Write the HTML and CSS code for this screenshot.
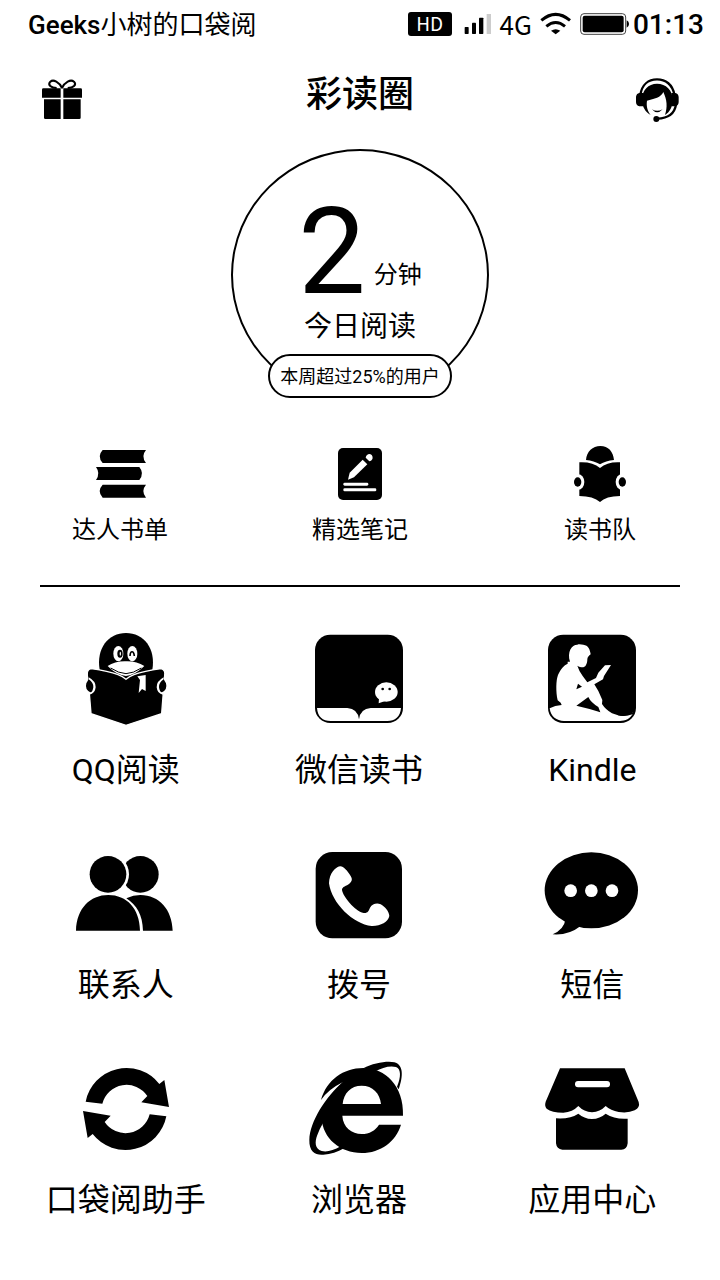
FILE: index.html
```html
<!DOCTYPE html>
<html lang="zh-CN">
<head>
  <meta charset="UTF-8" />
  <meta name="viewport" content="width=device-width, initial-scale=1.0"/>
  <title>彩读圈</title>
  <link rel="stylesheet" href="styles.css">
</head>
<body>

  <div class="status-bar">
    <span class="carrier">Geeks<span class="carrier-name">小树的口袋阅</span></span>
    <div class="status-icons">
      <span class="hd">HD</span>
      <svg class="signal" viewBox="189 39 84 66" aria-hidden="true">
        <rect x="191" y="81" width="12" height="21" rx="2"/>
        <rect x="213" y="68" width="12" height="34" rx="2"/>
        <rect x="234" y="53" width="13" height="49" rx="2"/>
        <rect x="257" y="42" width="13" height="60" fill="#ccc"/>
      </svg>
      <span class="network">4G</span>
      <svg class="wifi" viewBox="424 39 96 66" aria-hidden="true">
        <path d="M428 61Q471 25 514 61M443 79Q471 56 499 79" fill="none" stroke="#000" stroke-width="9"/>
        <path d="M457 92Q471 83 485 92L471 103Z"/>
      </svg>
      <div class="power">
        <svg class="battery" viewBox="540 39 147 66" aria-hidden="true">
          <rect x="542" y="41" width="135" height="62" rx="10" fill="none" stroke="#444" stroke-width="3"/>
          <rect x="548" y="47" width="123" height="50" rx="6"/>
          <path d="M680 61Q687 64 687 72Q687 80 680 83Z"/>
        </svg>
        <span class="time">01:13</span>
      </div>
    </div>
  </div>

  <header class="header">
    <button class="icon-btn" aria-label="礼物">
      <svg viewBox="120 234 132 132">
        <path d="M130 265H182V293H126V269Q126 265 130 265ZM190 265H242Q246 265 246 269V293H190ZM132 298H182V357H136Q132 357 132 353ZM190 298H242V353Q242 357 238 357H190Z"/>
        <path d="M186 264C178 246 160 237 151 245C142 255 153 264 170 264M186 264C194 246 212 237 222 245C231 255 220 264 203 264" fill="none" stroke="#000" stroke-width="6"/>
      </svg>
    </button>
    <h1 class="logo">彩读圈</h1>
    <button class="icon-btn" aria-label="客服">
      <svg viewBox="708 234 132 132">
        <path d="M721 284C726 254 745 238 771 238C797 238 818 254 823 284M828 314C824 340 804 355 772 356" fill="none" stroke="#000" stroke-width="7"/>
        <path d="M718 279H730V319H718Q708 316 708 306V291Q709 281 718 279ZM826 279H814V319H826Q836 316 836 306V291Q835 281 826 279Z"/>
        <path d="M726 300C726 270 745 251 771 251C798 251 818 270 818 300C818 320 809 337 795 345C803 320 801 300 790 276C784 292 762 297 741 302C738 320 744 335 752 345C735 336 727 320 726 300Z"/>
        <path d="M756 328Q771 337 788 328Q771 346 756 328Z"/>
        <circle cx="769" cy="357" r="9"/>
      </svg>
    </button>
  </header>

  <section class="today">
    <div class="dial">
      <div class="minutes">
        <span class="count">2</span>
        <span class="unit">分钟</span>
      </div>
      <div class="caption">今日阅读</div>
    </div>
    <div class="rank">本周超过25%的用户</div>
  </section>

  <nav class="shortcuts">
    <a class="shortcut" href="#">
      <svg viewBox="96 33 168 168">
        <path d="M128 45H258Q242 64 258 84H128Q110 64 128 45ZM108 96H238Q254 115 238 135H108Q122 115 108 96ZM128 149H258Q242 168 258 188H128Q110 168 128 149Z"/>
      </svg>
      <span>达人书单</span>
    </a>
    <a class="shortcut" href="#">
      <svg viewBox="816 33 168 168">
        <rect x="834" y="39" width="132" height="156" rx="15"/>
        <g fill="#fff">
          <path d="M908 74L922 88L882 127L864 134L869 113Z"/>
          <path d="M917 68C919 57 929 54 935 60C941 68 937 77 928 79Z"/>
          <rect x="850" y="143" width="75" height="9" rx="4"/>
          <rect x="850" y="160" width="99" height="9" rx="4"/>
        </g>
      </svg>
      <span>精选笔记</span>
    </a>
    <a class="shortcut" href="#">
      <svg viewBox="96 33 168 168">
        <path d="M138 75C140 49 158 33 181 33C205 33 220 50 222 75Q197 77 180 88Q162 77 138 75Z"/>
        <path d="M118 82Q158 80 180 99Q202 80 240 82V183Q198 183 180 201Q160 183 118 183Z"/>
        <ellipse cx="115" cy="141" rx="18" ry="23" fill="#fff"/>
        <ellipse cx="245" cy="141" rx="18" ry="23" fill="#fff"/>
        <ellipse cx="113" cy="141" rx="11" ry="14"/>
        <ellipse cx="247" cy="141" rx="11" ry="14"/>
      </svg>
      <span>读书队</span>
    </a>
  </nav>

  <main class="apps">
    <a class="app" href="#">
      <svg viewBox="54 30 288 288">
        <path d="M119 150C108 85 145 39 198 39C251 39 288 85 277 150L198 185Z"/>
        <g fill="#fff">
          <ellipse cx="175" cy="101" rx="15" ry="23"/>
          <ellipse cx="217" cy="101" rx="15" ry="23"/>
          <path d="M143 138Q165 123 198 124Q230 123 253 138Q225 166 198 168Q170 166 143 138Z"/>
        </g>
        <ellipse cx="180" cy="101" rx="8" ry="12"/>
        <ellipse cx="181" cy="101" rx="2" ry="6" fill="#fff"/>
        <path d="M210 108C211 91 221 91 223 108" fill="none" stroke="#000" stroke-width="5"/>
        <path d="M152 144Q176 160 198 161Q220 160 244 144" fill="none" stroke="#000" stroke-width="3"/>
        <path d="M94 146Q145 153 174 164Q188 169 198 178Q208 169 222 164Q251 153 303 146Q317 149 314 166L305 281L198 316L93 281L88 220L82 166Q80 148 94 146Z" stroke="#fff" stroke-width="4"/>
        <path d="M232 169L257 165V213L246 207L236 219L240 180Z" fill="#fff"/>
        <path d="M86 172Q108 184 107 202Q105 222 88 224ZM311 172Q289 184 290 202Q292 222 309 224Z" fill="#fff"/>
        <path d="M86 178Q101 188 100 202Q98 217 91 217Q74 209 79 190ZM311 178Q296 188 297 202Q299 217 306 217Q323 209 318 190Z"/>
      </svg>
      <span>QQ阅读</span>
    </a>
    <a class="app" href="#">
      <svg viewBox="63 30 288 288">
        <rect x="75" y="44" width="264" height="265" rx="46"/>
        <g fill="#fff">
          <path d="M81 264H172Q203 266 207 298Q211 266 242 264H333C331 290 315 303 292 303H122C98 303 83 290 81 264Z"/>
          <ellipse cx="289" cy="216" rx="34" ry="29"/>
          <path d="M267 234L266 250L288 242Z"/>
        </g>
        <circle cx="278" cy="207" r="4"/>
        <circle cx="299" cy="207" r="4"/>
      </svg>
      <span>微信读书</span>
    </a>
    <a class="app" href="#">
      <svg viewBox="762 30 288 288">
        <rect x="774" y="44" width="264" height="265" rx="46"/>
        <path fill="#fff" d="M840 125C831 95 845 74 862 74C868 71 875 74 880 74C895 76 900 88 902 103C897 107 892 111 892 118C892 127 889 140 880 142C872 142 867 140 862 137Q867 153 878 168L892 187L918 174L925 158L945 136L963 135L942 168L939 178L913 193L925 213L937 240L936 252Q946 268 966 280L984 286Q1010 292 1030 277C1022 298 1005 303 990 303H822C800 303 782 290 779 265Q795 256 815 255L812 248L803 241C797 215 798 180 804 165C812 148 822 135 833 131V125Z"/>
        <path d="M859 257L895 231Q902 247 925 261L931 277Q900 266 859 257ZM864 191L876 200L859 208ZM984 279Q1008 286 1033 275L1028 283Q1005 291 984 286Z"/>
      </svg>
      <span>Kindle</span>
    </a>
    <a class="app" href="#">
      <svg viewBox="54 15 288 288">
        <circle cx="241" cy="103" r="55"/>
        <circle cx="144" cy="103" r="63" fill="#fff"/>
        <circle cx="144" cy="103" r="55"/>
        <path d="M48 272C50 205 90 165 145 165C200 165 239 205 240 272ZM199 175Q220 165 241 165C298 166 336 208 338 272H249C248 225 230 195 199 175Z"/>
      </svg>
      <span>联系人</span>
    </a>
    <a class="app" href="#">
      <svg viewBox="753 15 288 288">
        <rect x="767" y="36" width="259" height="259" rx="50"/>
        <path fill="#fff" d="M840 79C850 78 862 92 872 108C878 118 876 124 868 131C860 138 846 139 846 150C850 172 885 212 908 218C922 221 926 214 930 203C937 192 950 188 962 193C975 200 987 214 988 228C985 246 960 259 935 258C880 253 815 190 807 130C808 100 825 82 840 79Z"/>
      </svg>
      <span>拨号</span>
    </a>
    <a class="app" href="#">
      <svg viewBox="72 15 288 288">
        <ellipse cx="214" cy="151" rx="140" ry="114"/>
        <path d="M136 240Q132 268 98 283Q145 287 182 258Z"/>
        <g fill="#fff">
          <circle cx="152" cy="152" r="19"/>
          <circle cx="214" cy="152" r="19"/>
          <circle cx="276" cy="152" r="19"/>
        </g>
      </svg>
      <span>短信</span>
    </a>
    <a class="app" href="#">
      <svg viewBox="114 30 288 288">
        <path d="M137 155A125 125 0 0 1 358 102L373 90L387 171L304 157L322 138A75 75 0 0 0 187 161Z"/>
        <path d="M379 199A125 125 0 0 1 158 252L143 264L129 183L212 197L194 216A75 75 0 0 0 329 193Z"/>
      </svg>
      <span>口袋阅助手</span>
    </a>
    <a class="app" href="#">
      <svg viewBox="813 30 288 288">
        <path fill-rule="evenodd" d="M843 150C860 90 910 54 970 54C1036 54 1092 108 1089 197H907C909 232 935 252 965 252C988 252 1007 241 1017 224H1083C1068 274 1022 309 965 309C900 309 848 265 845 205L850 170Q875 130 908 97Q865 118 843 150ZM908 162H1023C1020 130 998 107 965 107C932 107 911 130 908 162Z"/>
        <path d="M908 97C858 140 809 215 808 270C807 305 826 316 850 314C872 313 893 306 912 295L902 289C880 302 860 307 845 303C824 297 824 275 832 255Q838 237 848 221L880 160Z"/>
        <path d="M970 55C1000 39 1042 32 1063 37C1091 44 1090 80 1076 118L1071 110C1083 82 1084 57 1068 51C1050 46 1025 53 1006 64Z"/>
      </svg>
      <span>浏览器</span>
    </a>
    <a class="app" href="#">
      <svg viewBox="72 30 288 288">
        <path d="M120 55H314L356 156Q361 172 344 181Q325 190 296 186Q272 182 257 168Q240 186 216 187Q192 186 175 168Q158 186 130 188Q95 188 80 176Q73 168 77 155Z"/>
        <path d="M108 205Q150 208 175 191Q192 206 216 207Q240 206 257 191Q285 209 323 206V280Q321 299 304 299H127Q110 298 108 280Z"/>
        <rect x="165" y="93" width="105" height="19" rx="9" fill="#fff"/>
      </svg>
      <span>应用中心</span>
    </a>
  </main>

</body>
</html>
```
FILE: styles.css
```css
*,
*::before {
  box-sizing: border-box;
}

body {
  margin: 0;
  background: #fff;
  color: #000;
  font-family: Roboto, "Noto Sans CJK SC", sans-serif;
}

svg {
  display: block;
  overflow: visible;
}

a {
  color: inherit;
  text-decoration: none;
}

/* status bar */
.status-bar {
  display: flex;
  justify-content: space-between;
  align-items: flex-start;
  height: 50px;
  padding: 0 16px 0 28px;
}

.carrier {
  font-size: 26px;
  font-weight: 500;
  line-height: 50px;
}

.carrier-name {
  font-weight: 400;
}

.status-icons {
  display: flex;
  align-items: center;
  gap: 8px;
  height: 48px;
}

.hd {
  width: 44px;
  margin-right: 4px;
  padding-bottom: 2px;
  border-radius: 3px;
  background: #000;
  color: #fff;
  font-family: "Noto Sans CJK SC", sans-serif;
  font-size: 19px;
  line-height: 22px;
  text-align: center;
}

.signal {
  width: 28px;
  height: 22px;
}

.network {
  font-family: "Noto Sans CJK SC", sans-serif;
  font-size: 26px;
  line-height: 48px;
}

.wifi {
  width: 32px;
  height: 22px;
}

.power {
  display: flex;
  align-items: center;
  gap: 4px;
}

.battery {
  width: 49px;
  height: 22px;
}

.time {
  padding-top: 2px;
  font-size: 28px;
  font-weight: 500;
  line-height: 48px;
}

/* header */
.header {
  display: flex;
  justify-content: space-between;
  align-items: center;
  height: 99px;
  padding: 0 40px;
}

.icon-btn {
  padding: 0;
  border: none;
  background: none;
  cursor: pointer;
}

.icon-btn svg {
  width: 44px;
  height: 44px;
}

.logo {
  margin: 0 0 10px;
  font-size: 36px;
  font-weight: 500;
  line-height: 36px;
}

/* reading time today */
.today {
  display: flex;
  flex-direction: column;
  align-items: center;
}

.dial {
  position: relative;
  width: 258px;
  height: 218px;
  padding-top: 53px;
  overflow: hidden;
}

.dial::before {
  content: '';
  position: absolute;
  top: 0;
  left: 0;
  width: 100%;
  height: 252px;
  border: 2px solid #000;
  border-radius: 50%;
}

.minutes {
  display: flex;
  justify-content: center;
  align-items: flex-end;
  gap: 8px;
}

.count {
  font-size: 120px;
  line-height: 100px;
}

.unit {
  padding-bottom: 11px;
  font-size: 24px;
  line-height: 32px;
}

.caption {
  margin-top: 9px;
  font-size: 28px;
  line-height: 32px;
  text-align: center;
}

.rank {
  position: relative;
  margin-top: -13px;
  padding: 1px 10px 0;
  border: 2px solid #000;
  border-radius: 22px;
  background: #fff;
  font-size: 18px;
  font-weight: 400;
  line-height: 39px;
}

/* shortcuts */
.shortcuts {
  display: grid;
  grid-template-columns: repeat(3, 1fr);
  margin-top: 48px;
}

.shortcut {
  display: flex;
  flex-direction: column;
  align-items: center;
  gap: 11px;
  font-size: 24px;
  line-height: 34px;
}

.shortcut svg {
  width: 56px;
  height: 56px;
}

/* app grid */
.apps {
  display: grid;
  grid-template-columns: repeat(3, 1fr);
  row-gap: 52px;
  padding: 0 11px 40px 9px;
}

.apps::before {
  content: '';
  grid-column: 1 / -1;
  height: 2px;
  margin: 38px 29px -9px 31px;
  background: #000;
}

.app {
  display: flex;
  flex-direction: column;
  align-items: center;
  gap: 21px;
  font-size: 32px;
  line-height: 46px;
}

.app svg {
  width: 96px;
  height: 96px;
}
```
